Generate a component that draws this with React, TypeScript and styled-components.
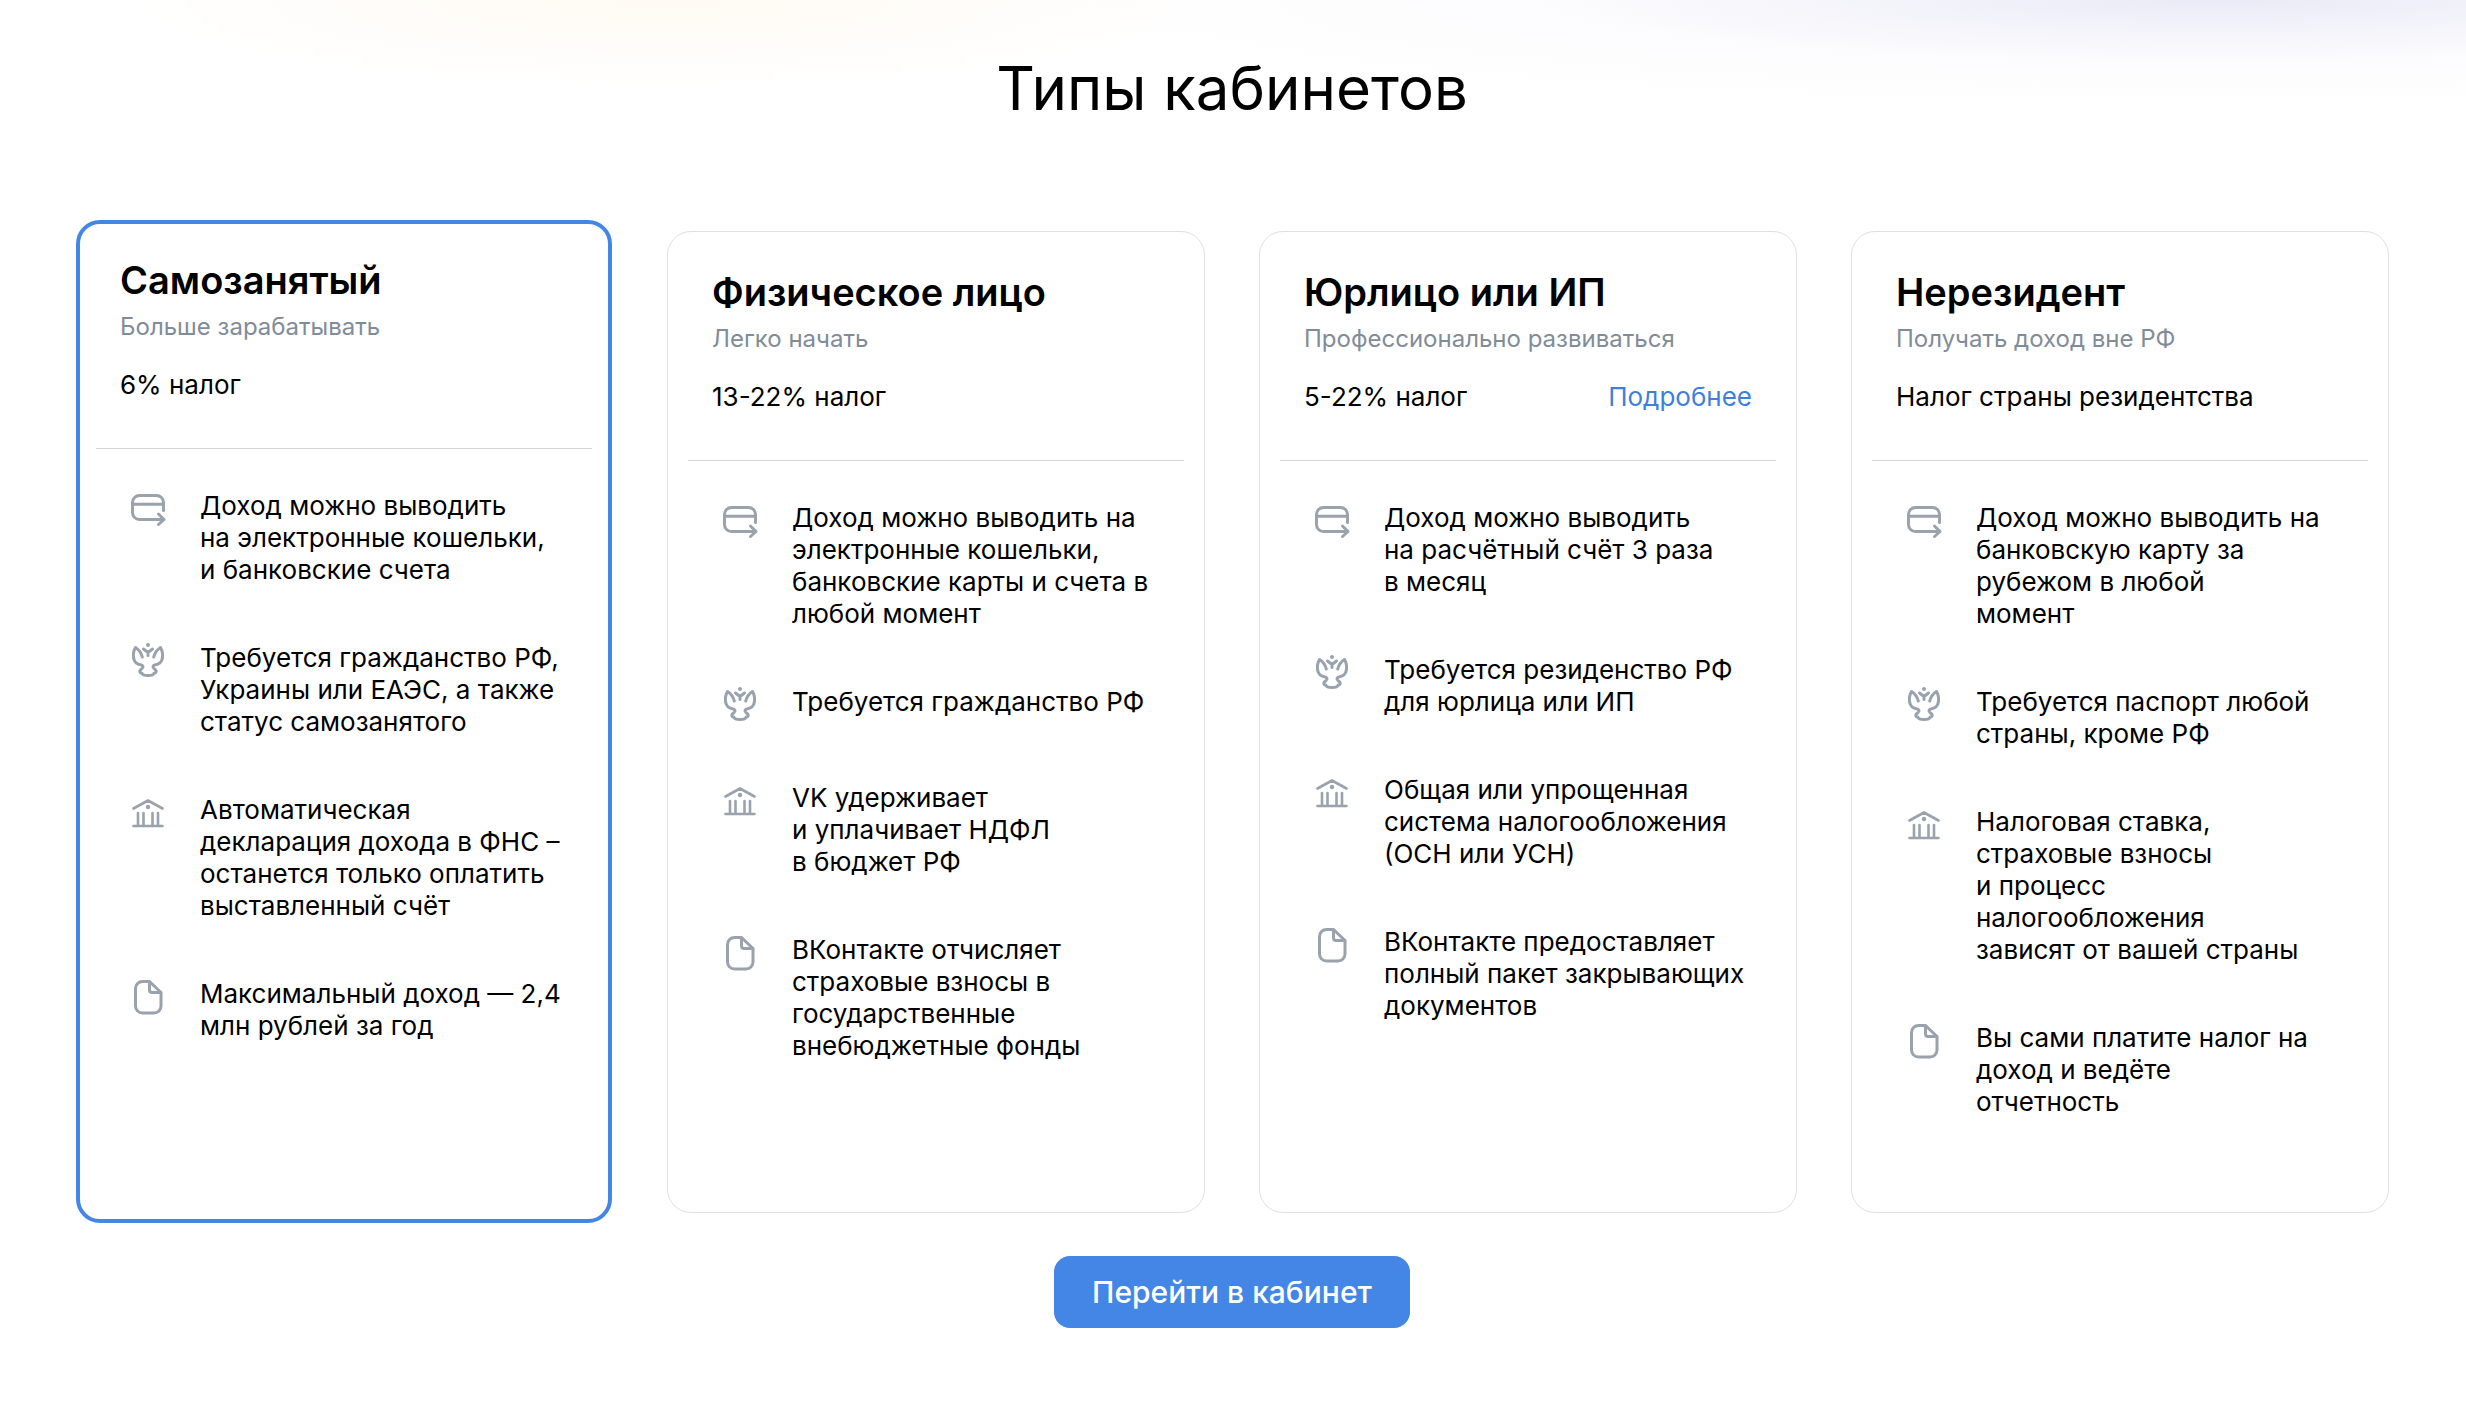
import React from "react";
import styled, { createGlobalStyle, css } from "styled-components";

const GlobalStyle = createGlobalStyle`
  *, *::before, *::after { box-sizing: border-box; }
  body {
    margin: 0;
    background: #fff;
    color: #000;
    font-family: Inter, "Noto Sans", sans-serif;
    -webkit-font-smoothing: antialiased;
  }
  h1, h2, p, ul { margin: 0; padding: 0; }
`;

const Page = styled.main`
  display: flex;
  flex-direction: column;
  align-items: center;
  min-height: 100vh;
  padding: 48px 77px 76px 75px;
  background:
    radial-gradient(ellipse 560px 90px at 27% 0, rgba(255, 248, 238, 0.7), rgba(255, 255, 255, 0)),
    radial-gradient(ellipse 1200px 110px at 90% 0, rgba(232, 232, 246, 0.9), rgba(250, 250, 253, 0.6) 55%, rgba(255, 255, 255, 0)),
    #fff;
`;

const Title = styled.h1`
  font-size: 60px;
  line-height: 80px;
  font-weight: 400;
  text-align: center;
`;

const Cards = styled.section`
  display: grid;
  grid-template-columns: repeat(4, minmax(0, 1fr));
  gap: 54px;
  width: 100%;
  margin-top: 103px;
`;

const Card = styled.article<{ $featured?: boolean }>`
  display: flex;
  flex-direction: column;
  padding: 36px 20px 94px;
  border: 1px solid #dfe0e2;
  border-radius: 24px;
  background: #fff;
  ${(p) =>
    p.$featured &&
    css`
      margin: -11px 1px -10px;
      padding: 32px 16px 94px;
      border: 4px solid #4486e5;
    `}
`;

const CardHead = styled.header`
  padding: 0 24px 47px;
  border-bottom: 1px solid #d5d6d8;
`;

const CardTitle = styled.h2`
  font-size: 38px;
  line-height: 48px;
  font-weight: 600;
`;

const Tagline = styled.p`
  margin-top: 7px;
  font-size: 24px;
  line-height: 32px;
  color: #818c99;
`;

const TaxRow = styled.div`
  display: flex;
  justify-content: space-between;
  gap: 16px;
  margin-top: 26px;
  font-size: 26px;
  line-height: 32px;
`;

const MoreLink = styled.a`
  color: #3f7fdc;
  text-decoration: none;
`;

const Features = styled.ul`
  display: flex;
  flex-direction: column;
  gap: 56px;
  padding: 41px 0 0 32px;
  list-style: none;
`;

const Feature = styled.li`
  display: flex;
  align-items: flex-start;
  gap: 32px;
  min-height: 40px;
`;

const FeatureText = styled.p`
  font-size: 26px;
  line-height: 32px;
  white-space: pre-line;
`;

const Icon = styled.svg`
  flex: none;
  width: 40px;
  height: 40px;
  fill: none;
  stroke: #99a2ad;
  stroke-width: 3;
  stroke-linecap: round;
  stroke-linejoin: round;
`;

const Action = styled.button`
  height: 72px;
  margin-top: 43px;
  padding: 0 38px;
  border: 0;
  border-radius: 16px;
  background: #4486e5;
  color: #fff;
  font: 500 30px/40px Inter, "Noto Sans", sans-serif;
  cursor: pointer;
`;

type IconName = "card" | "eagle" | "bank" | "doc";

const icons: Record<IconName, React.ReactNode> = {
  card: (
    <>
      <path d="M35.5 20.5v-8a7 7 0 0 0-7-7h-17a7 7 0 0 0-7 7v10a7 7 0 0 0 7 7h24" />
      <path d="M4.5 14.3h31M30.500 24l5.500 5.500-5.500 5" />
    </>
  ),
  eagle: (
    <>
      <circle cx="20" cy="3" r="2" fill="#99a2ad" stroke="none" />
      <path d="M15.500 7L20 10.500L24.500 7M20 10.500v3" />
      <path d="M14.300 15C13 10.500 11.500 8 7.500 5.500C5.500 9 5 14 6 17.500C7 20.500 9 22.300 12.500 22.800C15.500 23.300 15.800 25.500 13.500 27C10.500 29 12 31 14 31.300C14.500 33 17 33.500 20 33.500C23 33.500 25.500 33 26 31.300C28 31 29.500 29 26.500 27C24.200 25.500 24.500 23.300 27.500 22.800C31 22.300 33 20.500 34 17.500C35 14 34.500 9 32.500 5.500C28.500 8 27 10.500 25.700 15" />
    </>
  ),
  bank: (
    <>
      <circle cx="20" cy="13" r="2.200" fill="#99a2ad" stroke="none" />
      <path strokeWidth="2.600" d="M5.500 14.500L20 6.500l14.500 8M5.500 32h29M10 19V31M15.500 19V31M24.500 19V31M30 19V31" />
    </>
  ),
  doc: (
    <>
      <path d="M14.500 3.500h7l11.500 11V28a7 7 0 0 1-7 7H14.500a7 7 0 0 1-7-7V10.500a7 7 0 0 1 7-7z" />
      <path d="M21.500 4v8a2.500 2.500 0 0 0 2.500 2.500h8.500" />
    </>
  ),
};

interface Cabinet {
  title: string;
  tagline: string;
  tax: string;
  more?: boolean;
  featured?: boolean;
  features: [IconName, string][];
}

const cabinets: Cabinet[] = [
  {
    title: "Самозанятый",
    tagline: "Больше зарабатывать",
    tax: "6% налог",
    featured: true,
    features: [
      ["card", "Доход можно выводить\nна электронные кошельки,\nи банковские счета"],
      ["eagle", "Требуется гражданство РФ,\nУкраины или ЕАЭС, а также\nстатус самозанятого"],
      ["bank", "Автоматическая\nдекларация дохода в ФНС –\nостанется только оплатить\nвыставленный счёт"],
      ["doc", "Максимальный доход — 2,4\nмлн рублей за год"],
    ],
  },
  {
    title: "Физическое лицо",
    tagline: "Легко начать",
    tax: "13-22% налог",
    features: [
      ["card", "Доход можно выводить на\nэлектронные кошельки,\nбанковские карты и счета в\nлюбой момент"],
      ["eagle", "Требуется гражданство РФ"],
      ["bank", "VK удерживает\nи уплачивает НДФЛ\nв бюджет РФ"],
      ["doc", "ВКонтакте отчисляет\nстраховые взносы в\nгосударственные\nвнебюджетные фонды"],
    ],
  },
  {
    title: "Юрлицо или ИП",
    tagline: "Профессионально развиваться",
    tax: "5-22% налог",
    more: true,
    features: [
      ["card", "Доход можно выводить\nна расчётный счёт 3 раза\nв месяц"],
      ["eagle", "Требуется резиденство РФ\nдля юрлица или ИП"],
      ["bank", "Общая или упрощенная\nсистема налогообложения\n(ОСН или УСН)"],
      ["doc", "ВКонтакте предоставляет\nполный пакет закрывающих\nдокументов"],
    ],
  },
  {
    title: "Нерезидент",
    tagline: "Получать доход вне РФ",
    tax: "Налог страны резидентства",
    features: [
      ["card", "Доход можно выводить на\nбанковскую карту за\nрубежом в любой\nмомент"],
      ["eagle", "Требуется паспорт любой\nстраны, кроме РФ"],
      ["bank", "Налоговая ставка,\nстраховые взносы\nи процесс\nналогообложения\nзависят от вашей страны"],
      ["doc", "Вы сами платите налог на\nдоход и ведёте\nотчетность"],
    ],
  },
];

export default function App() {
  return (
    <>
      <GlobalStyle />
      <Page>
        <Title>Типы кабинетов</Title>
        <Cards>
          {cabinets.map((cabinet) => (
            <Card key={cabinet.title} $featured={cabinet.featured}>
              <CardHead>
                <CardTitle>{cabinet.title}</CardTitle>
                <Tagline>{cabinet.tagline}</Tagline>
                <TaxRow>
                  <span>{cabinet.tax}</span>
                  {cabinet.more && <MoreLink href="#details">Подробнее</MoreLink>}
                </TaxRow>
              </CardHead>
              <Features>
                {cabinet.features.map(([icon, text]) => (
                  <Feature key={text}>
                    <Icon viewBox="0 0 40 40" aria-hidden="true">
                      {icons[icon]}
                    </Icon>
                    <FeatureText>{text}</FeatureText>
                  </Feature>
                ))}
              </Features>
            </Card>
          ))}
        </Cards>
        <Action type="button">Перейти в кабинет</Action>
      </Page>
    </>
  );
}
